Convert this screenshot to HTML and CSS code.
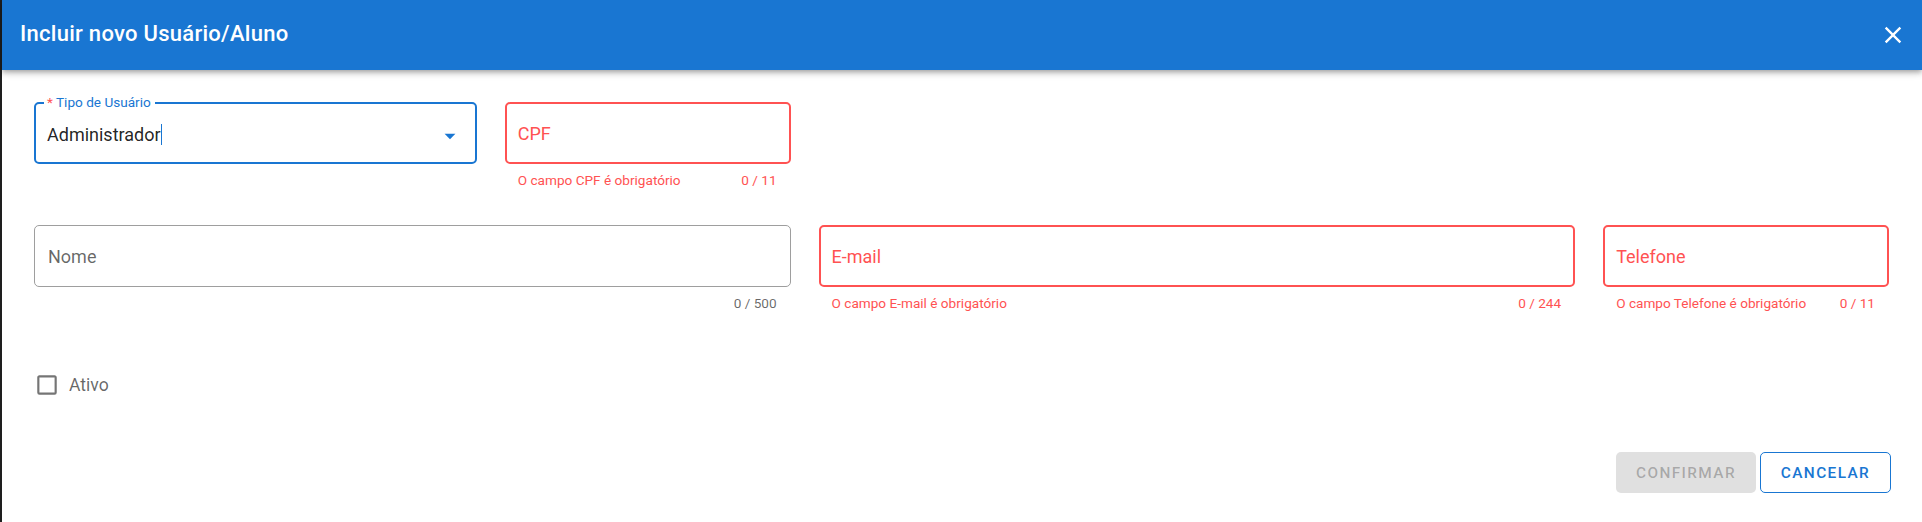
FILE: index.html
```html
<!DOCTYPE html>
<html lang="pt-BR">
<head>
<meta charset="utf-8">
<title>Incluir novo Usuário/Aluno</title>
<link rel="stylesheet" href="styles.css">
</head>
<body>
<div class="dialog">
  <header class="toolbar">
    <h1 class="title">Incluir novo Usuário/Aluno</h1>
    <button class="close" aria-label="Fechar">
      <svg viewBox="0 0 24 24" width="28" height="28"><path fill="#fff" d="M19,6.41L17.59,5L12,10.59L6.41,5L5,6.41L10.59,12L5,17.59L6.41,19L12,13.41L17.59,19L19,17.59L13.41,12L19,6.41Z"/></svg>
    </button>
  </header>

  <main class="form">
    <div class="row row-first">
      <div class="col span-3">
        <div class="field field-focus">
          <span class="legend"><span class="req">*</span> Tipo de Usuário</span>
          <span class="value">Administrador</span><span class="caret"></span>
          <svg class="menu-down" viewBox="0 0 24 24" width="26" height="26"><path fill="#1976d2" d="M7,10L12,15L17,10H7Z"/></svg>
        </div>
        <div class="details"></div>
      </div>
      <div class="col span-2">
        <div class="field field-error"><span class="placeholder">CPF</span></div>
        <div class="details error"><span>O campo CPF é obrigatório</span><span>0 / 11</span></div>
      </div>
    </div>

    <div class="row row-second">
      <div class="col span-5">
        <div class="field field-plain"><span class="placeholder">Nome</span></div>
        <div class="details muted"><span></span><span>0 / 500</span></div>
      </div>
      <div class="col span-5">
        <div class="field field-error"><span class="placeholder">E-mail</span></div>
        <div class="details error"><span>O campo E-mail é obrigatório</span><span>0 / 244</span></div>
      </div>
      <div class="col span-2">
        <div class="field field-error"><span class="placeholder">Telefone</span></div>
        <div class="details error"><span>O campo Telefone é obrigatório</span><span>0 / 11</span></div>
      </div>
    </div>

    <label class="checkbox">
      <svg viewBox="0 0 24 24" width="26" height="26"><path fill="#757575" d="M19,3H5C3.89,3 3,3.89 3,5V19A2,2 0 0,0 5,21H19A2,2 0 0,0 21,19V5C21,3.89 20.1,3 19,3M19,5V19H5V5H19Z"/></svg>
      <span>Ativo</span>
    </label>

    <div class="actions">
      <button class="btn btn-disabled" disabled>Confirmar</button>
      <button class="btn btn-outlined">Cancelar</button>
    </div>
  </main>
</div>
</body>
</html>
```

FILE: styles.css
```css
* { box-sizing: border-box; }
html, body { margin: 0; padding: 0; }
body {
  background: #1e1e1e;
  font-family: Roboto, "Liberation Sans", Arial, sans-serif;
  width: 1922px;
  height: 522px;
  overflow: hidden;
}
.dialog {
  margin-left: 2px;
  height: 522px;
  background: #fff;
}
.toolbar {
  position: relative;
  z-index: 2;
  height: 70px;
  background: #1976d2;
  display: flex;
  align-items: center;
  justify-content: space-between;
  padding: 0 15px 0 18px;
  box-shadow: 0 2px 4px -1px rgba(0,0,0,.2), 0 4px 5px 0 rgba(0,0,0,.14), 0 1px 10px 0 rgba(0,0,0,.12);
}
.title {
  margin: 0;
  color: #fff;
  font-size: 22px;
  font-weight: 500;
  letter-spacing: 0.0125em;
  line-height: 1;
  padding-bottom: 2px;
}
.close {
  background: none;
  border: 0;
  padding: 0;
  width: 28px;
  height: 28px;
  display: flex;
}
.form {
  padding: 32px 33px 0 32px;
}
.row {
  display: grid;
  grid-template-columns: repeat(12, 1fr);
  column-gap: 28px;
}
.row-second { margin-top: 37px; }
.span-2 { grid-column: span 2; }
.span-3 { grid-column: span 3; }
.span-5 { grid-column: span 5; }

.field {
  position: relative;
  height: 62px;
  border-radius: 5px;
  display: flex;
  align-items: center;
  font-size: 18px;
}
.field-focus { border: 2px solid #1976d2; padding: 0 11px; color: rgba(0,0,0,.87); }
.field-error { border: 2px solid #ff5252; padding: 0 11px; color: #ff5252; }
.field-plain { border: 1px solid #9e9e9e; padding: 0 13px; color: rgba(0,0,0,.6); }
.field-focus .value { padding-top: 3px; }
.caret {
  display: inline-block;
  width: 1px;
  height: 21px;
  background: #1976d2;
  margin-top: 3px;
}
.legend {
  position: absolute;
  top: -10px;
  left: 8px;
  padding: 0 4px 0 3px;
  background: #fff;
  color: #1976d2;
  font-size: 13.6px;
  line-height: 16px;
}
.req { color: #ff5252; }
.menu-down {
  position: absolute;
  right: 12px;
  top: 19px;
}
.details {
  height: 24px;
  padding: 8px 14px 0 13px;
  display: flex;
  justify-content: space-between;
  font-size: 13.6px;
  line-height: 16px;
}
.details.error { color: #ff5252; }
.details.muted { color: rgba(0,0,0,.6); }

.checkbox {
  margin-top: 61px;
  display: flex;
  align-items: center;
  gap: 9px;
  font-size: 17.6px;
  color: rgba(0,0,0,.6);
  height: 26px;
}
.actions {
  margin-top: 54px;
  display: flex;
  justify-content: flex-end;
  gap: 4px;
  margin-right: -2px;
}
.btn {
  height: 41px;
  border-radius: 5px;
  font-family: Roboto, "Liberation Sans", Arial, sans-serif;
  font-size: 15.4px;
  font-weight: 500;
  letter-spacing: 0.0892em;
  text-transform: uppercase;
  padding: 0 17px;
  cursor: pointer;
}
.btn-disabled {
  width: 140px;
  background: #e0e0e0;
  color: rgba(0,0,0,.26);
  border: 0;
}
.btn-outlined {
  width: 131px;
  background: #fff;
  color: #1976d2;
  border: 1px solid #1976d2;
}
```
